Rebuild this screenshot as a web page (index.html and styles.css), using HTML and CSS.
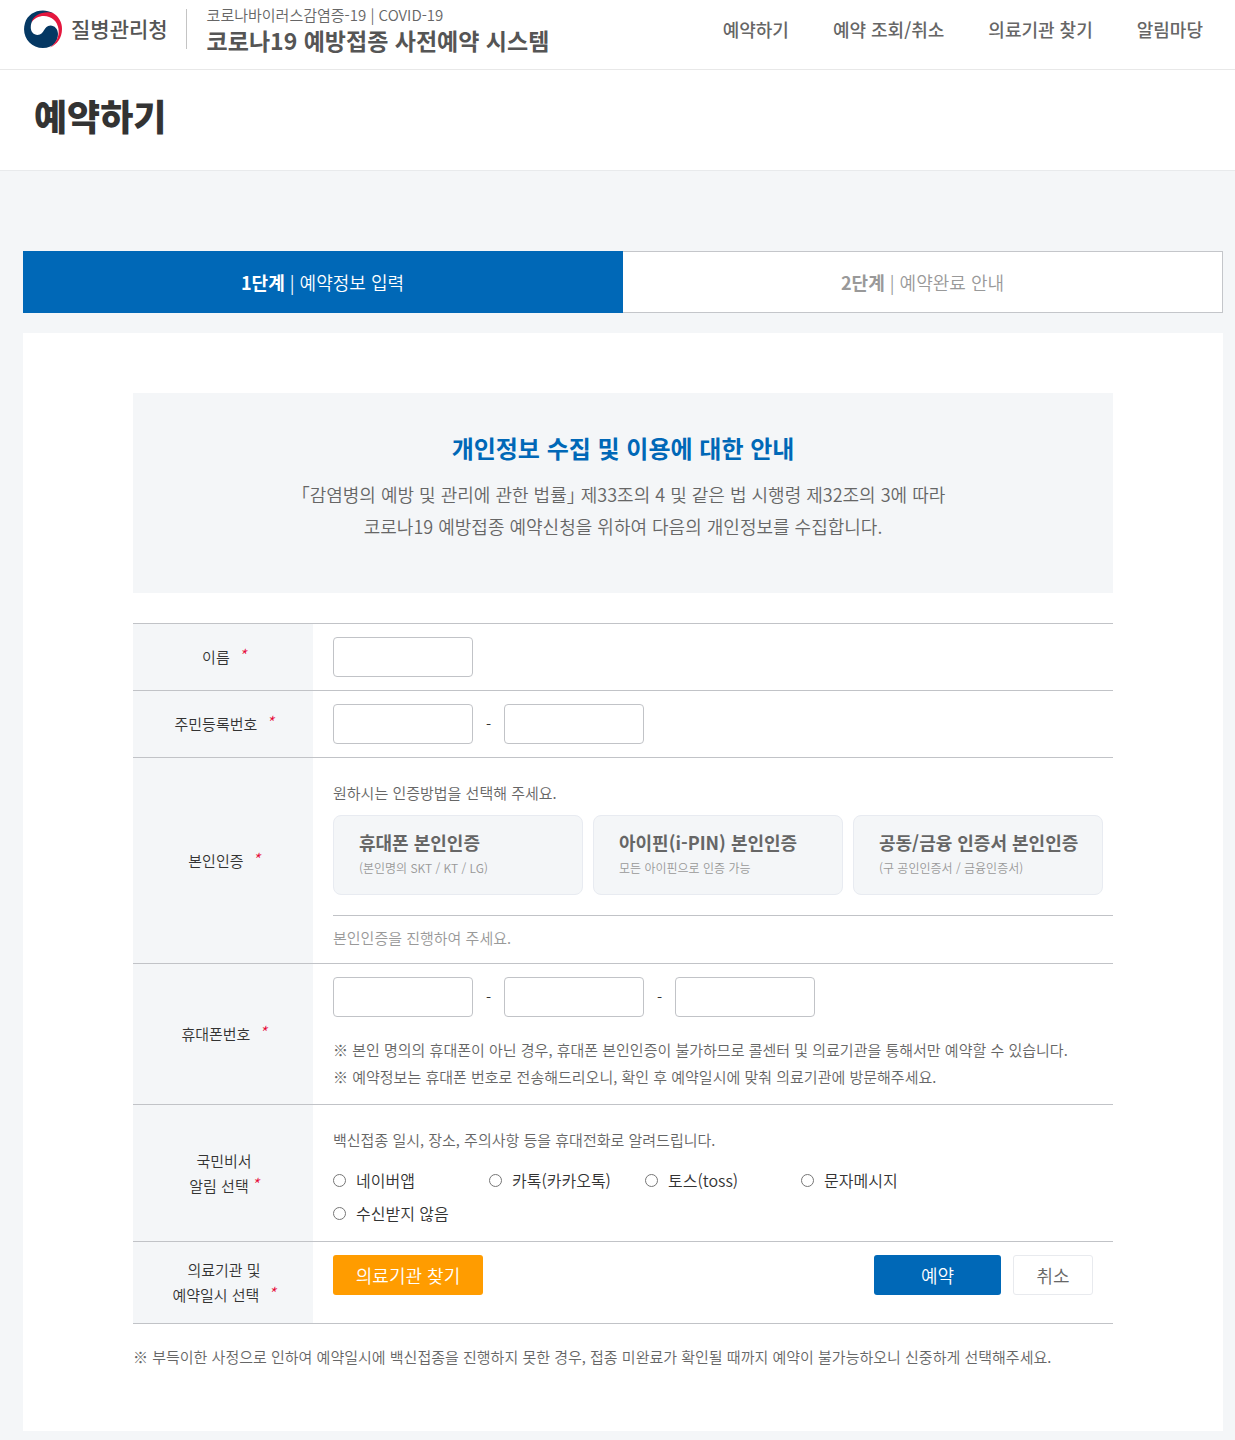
FILE: index.html
```html
<!DOCTYPE html>
<html lang="ko">
<head>
  <meta charset="utf-8">
  <meta name="viewport" content="width=device-width, initial-scale=1">
  <title>코로나19 예방접종 사전예약 시스템</title>
  <link rel="stylesheet" href="styles.css">
</head>
<body>
  <header class="site-header">
    <a class="agency" href="#">
      <svg class="agency-mark" viewBox="0 0 38 38" aria-hidden="true">
        <path d="M29 3 C18 -3 4 2 1 13 C-3 26 6 38 19 38 C29 38 34 31 34 24 C34 19 30.500 15.500 26.500 15.500 C19.500 15.500 20.500 25 13.500 25 C9.500 25 6.500 21.500 6.800 17 C7 12 9 8.500 14 6 C19 3.500 24 2.500 29 3 Z" fill="#053863"/>
        <path d="M7.500 12.500 C9 5 20 0.500 29 3 C35 6.500 38 12.500 38 19 C38 28 33 34.500 26 37.500 C32 33 35.500 27 34.500 19 C33.500 11 27 6 20 6 C14.500 6 10 8.500 7.500 12.500 Z" fill="#e4173e"/>
      </svg>
      <span class="agency-name">질병관리청</span>
    </a>
    <div class="system">
      <span class="system-sub">코로나바이러스감염증-19 | COVID-19</span>
      <strong class="system-name">코로나19 예방접종 사전예약 시스템</strong>
    </div>
    <nav class="main-nav">
      <a href="#">예약하기</a>
      <a href="#">예약 조회/취소</a>
      <a href="#">의료기관 찾기</a>
      <a href="#">알림마당</a>
    </nav>
  </header>

  <div class="page-title">
    <h1>예약하기</h1>
  </div>

  <main class="content">
    <ol class="steps">
      <li class="step step-current" aria-current="step"><span><b>1단계</b> | 예약정보 입력</span></li>
      <li class="step"><span><b>2단계</b> | 예약완료 안내</span></li>
    </ol>

    <form class="panel">
      <section class="notice">
        <h2>개인정보 수집 및 이용에 대한 안내</h2>
        <p>「감염병의 예방 및 관리에 관한 법률」 제33조의 4 및 같은 법 시행령 제32조의 3에 따라<br>코로나19 예방접종 예약신청을 위하여 다음의 개인정보를 수집합니다.</p>
      </section>

      <table class="form-table">
        <tbody>
          <tr>
            <th scope="row"><label for="name">이름</label> <i class="required">*</i></th>
            <td><input class="text-box" type="text" id="name"></td>
          </tr>
          <tr>
            <th scope="row"><label for="rrn1">주민등록번호</label> <i class="required">*</i></th>
            <td>
              <div class="field-group">
                <input class="text-box" type="text" id="rrn1">
                <span class="dash">-</span>
                <input class="text-box" type="password" aria-label="주민등록번호 뒷자리">
              </div>
            </td>
          </tr>
          <tr>
            <th scope="row">본인인증 <i class="required">*</i></th>
            <td class="roomy">
              <p class="guide">원하시는 인증방법을 선택해 주세요.</p>
              <div class="auth-list">
                <button class="auth" type="button"><b>휴대폰 본인인증</b><small>(본인명의 SKT / KT / LG)</small></button>
                <button class="auth" type="button"><b>아이핀(i-PIN) 본인인증</b><small>모든 아이핀으로 인증 가능</small></button>
                <button class="auth" type="button"><b>공동/금융 인증서 본인인증</b><small>(구 공인인증서 / 금융인증서)</small></button>
              </div>
              <p class="auth-status">본인인증을 진행하여 주세요.</p>
            </td>
          </tr>
          <tr>
            <th scope="row"><label for="tel1">휴대폰번호</label> <i class="required">*</i></th>
            <td>
              <div class="field-group">
                <input class="text-box" type="tel" id="tel1">
                <span class="dash">-</span>
                <input class="text-box" type="tel" aria-label="휴대폰번호 가운데 자리">
                <span class="dash">-</span>
                <input class="text-box" type="tel" aria-label="휴대폰번호 끝자리">
              </div>
              <p class="hints">※ 본인 명의의 휴대폰이 아닌 경우, 휴대폰 본인인증이 불가하므로 콜센터 및 의료기관을 통해서만 예약할 수 있습니다.<br>※ 예약정보는 휴대폰 번호로 전송해드리오니, 확인 후 예약일시에 맞춰 의료기관에 방문해주세요.</p>
            </td>
          </tr>
          <tr>
            <th scope="row">국민비서<br>알림 선택<i class="required required-tight">*</i></th>
            <td class="roomy">
              <p class="guide">백신접종 일시, 장소, 주의사항 등을 휴대전화로 알려드립니다.</p>
              <div class="radio-list">
                <label><input type="radio" name="alarm">네이버앱</label>
                <label><input type="radio" name="alarm">카톡(카카오톡)</label>
                <label><input type="radio" name="alarm">토스(toss)</label>
                <label><input type="radio" name="alarm">문자메시지</label>
                <label><input type="radio" name="alarm">수신받지 않음</label>
              </div>
            </td>
          </tr>
          <tr>
            <th scope="row">의료기관 및<br>예약일시 선택 <i class="required">*</i></th>
            <td class="actions-cell">
              <div class="actions">
                <button class="btn btn-find" type="button">의료기관 찾기</button>
                <button class="btn btn-reserve" type="submit">예약</button>
                <button class="btn btn-cancel" type="button">취소</button>
              </div>
            </td>
          </tr>
        </tbody>
      </table>

      <p class="footnote">※ 부득이한 사정으로 인하여 예약일시에 백신접종을 진행하지 못한 경우, 접종 미완료가 확인될 때까지 예약이 불가능하오니 신중하게 선택해주세요.</p>
    </form>
  </main>
</body>
</html>
```
FILE: styles.css
```css
* {
  box-sizing: border-box;
}

body {
  margin: 0;
  background: #f4f6f8;
  color: #666;
  font-family: "Noto Sans CJK KR", sans-serif;
  font-size: 15px;
  font-weight: 350;
  line-height: 24px;
}

h1, h2, p, ol {
  margin: 0;
  padding: 0;
}

b {
  font-weight: 700;
}

a {
  color: inherit;
  text-decoration: none;
}

button, input {
  font: inherit;
}

/* Header */
.site-header {
  display: flex;
  align-items: center;
  min-height: 70px;
  padding: 0 32px 12px 24px;
  border-bottom: 1px solid #e8e8e8;
  background: #fff;
}

.agency {
  display: flex;
  align-items: center;
  gap: 9px;
  height: 40px;
  padding-right: 18px;
  border-right: 1px solid #c4c4c4;
}

.agency-mark {
  width: 38px;
  height: 38px;
}

.agency-name {
  padding-bottom: 2px;
  color: #555;
  font-size: 21px;
  font-weight: 500;
}

.system {
  display: flex;
  flex-direction: column;
  padding: 2px 0 0 20px;
}

.system-sub {
  line-height: 20px;
}

.system-name {
  color: #555;
  font-size: 23px;
  font-weight: 700;
  line-height: 30px;
}

.main-nav {
  display: flex;
  gap: 44px;
  margin-left: auto;
  font-size: 18px;
  font-weight: 500;
}

.page-title {
  padding: 21px 34px 31px;
  border-bottom: 1px solid #e8eaec;
  background: #fff;
}

.page-title h1 {
  color: #333;
  font-size: 36px;
  font-weight: 900;
  line-height: 48px;
}

/* Steps */
.content {
  padding: 80px 12px 9px 23px;
}

.steps {
  display: grid;
  grid-template-columns: 1fr 1fr;
  margin-bottom: 20px;
  list-style: none;
}

.step {
  display: flex;
  align-items: center;
  justify-content: center;
  height: 62px;
  border: 1px solid #c4c6ca;
  border-left: 0;
  background: #fff;
  color: #999;
  font-size: 18px;
}

.step-current {
  border-color: #0068b7;
  background: #0068b7;
  color: #fff;
}

/* Form panel */
.panel {
  padding: 60px 110px;
  background: #fff;
}

.notice {
  margin-bottom: 30px;
  padding: 37px 20px 51px;
  background: #f4f6f8;
  text-align: center;
  font-size: 18px;
  line-height: 32px;
}

.notice h2 {
  margin-bottom: 12px;
  color: #0068b7;
  font-size: 24px;
  font-weight: 700;
  line-height: 36px;
}

/* Half-width corner brackets around the name of the law */
.notice p {
  font-feature-settings: "halt";
}

.form-table {
  width: 100%;
  border-collapse: separate;
  border-spacing: 0;
  border-bottom: 1px solid #c1c3c7;
}

.form-table th,
.form-table td {
  border-top: 1px solid #c1c3c7;
}

.form-table th {
  width: 180px;
  padding: 0 0 1px 2px;
  background: #f4f6f8;
  color: #333;
  font-weight: 350;
  line-height: 25px;
}

.form-table td {
  padding: 13px 0 13px 20px;
}

.form-table .roomy {
  padding-top: 23px;
}

.required {
  margin-left: 4px;
  color: #e60033;
  font-size: 18px;
  font-weight: 300;
  line-height: 20px;
}

.required-tight {
  margin-left: 2px;
}

.text-box {
  display: block;
  width: 140px;
  height: 40px;
  padding: 0 10px;
  border: 1px solid #c1c3c7;
  border-radius: 4px;
  background: #fff;
}

.field-group {
  display: flex;
  align-items: center;
}

.dash {
  width: 31px;
  color: #333;
  text-align: center;
}

.auth-list {
  display: grid;
  grid-template-columns: repeat(3, 1fr);
  gap: 10px;
  margin: 10px 10px 20px 0;
}

.auth {
  display: flex;
  flex-direction: column;
  height: 80px;
  padding: 12px 0 14px 25px;
  border: 1px solid #e8ebf1;
  border-radius: 8px;
  background: #f4f6f8;
  color: #666;
  text-align: left;
  white-space: nowrap;
}

.auth b {
  font-size: 18px;
  line-height: 28px;
}

.auth small {
  color: #999;
  font-size: 12px;
  line-height: 24px;
}

.auth-status {
  padding-top: 10px;
  border-top: 1px solid #c1c3c7;
  color: #999;
}

.hints {
  margin: 19px 0 1px;
  line-height: 27px;
}

.radio-list {
  display: grid;
  grid-template-columns: repeat(4, 20%);
  margin: 12px 0 -2px;
  color: #333;
  font-size: 16px;
  line-height: 33px;
}

.radio-list label {
  display: flex;
  align-items: center;
  gap: 10px;
  white-space: nowrap;
}

.radio-list input {
  width: 13px;
  height: 13px;
  margin: 0;
}

.form-table .actions-cell {
  padding: 13px 20px 28px;
}

.actions {
  display: flex;
  gap: 12px;
}

.btn {
  height: 40px;
  padding: 0;
  border: 1px solid transparent;
  border-radius: 3px;
  color: #fff;
  font-size: 18px;
}

.btn-find {
  width: 150px;
  margin-right: auto;
  background: #ff9c00;
}

.btn-reserve {
  width: 127px;
  background: #0068b7;
}

.btn-cancel {
  width: 80px;
  border-color: #e8eaee;
  background: #fff;
  color: #666;
}

.footnote {
  margin: 19px 0 1px;
  line-height: 27px;
}
```
